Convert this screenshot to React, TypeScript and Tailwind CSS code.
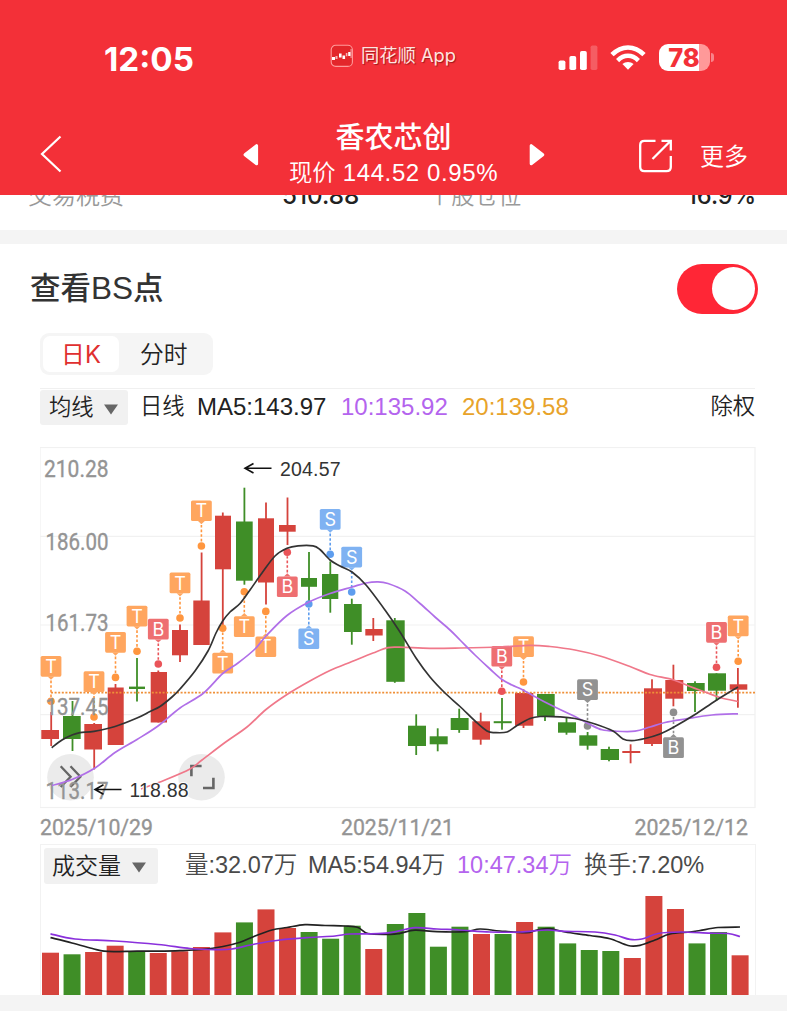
import React from 'react';

type Pt = [number, number];

const RED = '#d5433c';
const GREEN = '#3f8e27';

// [wickX, bodyLeft, bodyRight, bodyTop, bodyBottom, high, low, up]
const candles: [number, number, number, number, number, number, number, boolean][] = [
  [51.2, 41.3, 59, 730, 739, 712, 746, true],
  [72.5, 63, 80.7, 716, 739, 701, 751, false],
  [94.2, 84.3, 102, 724, 749.5, 723, 769.5, true],
  [115.5, 107.7, 123.7, 687.5, 745, 684, 745, true],
  [137, 129, 145, 686.6, 689, 658, 701.5, false],
  [158.3, 150.7, 167, 672, 722.5, 670.5, 722.5, true],
  [180, 172, 188, 630, 655.3, 624.5, 662, true],
  [201.6, 193.3, 209.7, 600.5, 645, 552.5, 645, true],
  [222.8, 215, 231, 515.7, 569.3, 512.5, 628, true],
  [244.4, 236, 252.7, 521.5, 580.7, 487.7, 584.7, false],
  [266, 258, 274, 518.3, 582.5, 502.5, 604.5, true],
  [287.5, 279, 295.7, 525, 531.7, 497.5, 545, true],
  [309, 301, 317, 578, 586.8, 552, 603, false],
  [330.3, 322, 338.3, 574, 599, 561.5, 612.7, false],
  [351.8, 344, 361.7, 604, 632, 598.7, 644.7, false],
  [373.3, 365.3, 382.7, 629, 635.5, 618, 641, true],
  [394.8, 386.3, 404.7, 620.3, 681.8, 618, 682.8, false],
  [416.2, 408, 426, 725.7, 746, 714.3, 755, false],
  [437.7, 429.7, 447.7, 736.3, 744.3, 728.3, 751.3, false],
  [459.2, 450.7, 468.6, 718, 730, 708.7, 732.8, false],
  [480.7, 472.3, 490, 721.3, 739.7, 712.7, 744.7, true],
  [502, 493.7, 511.7, 721.2, 723.2, 698, 729.7, false],
  [523.5, 515, 533.3, 693, 725.7, 689.3, 728, true],
  [545, 537, 554.7, 694, 716, 694, 721, false],
  [566.5, 558, 576, 722.3, 732.7, 717.3, 734.7, false],
  [587.6, 579.3, 597.3, 735.3, 745.7, 732, 749.7, false],
  [609, 600.7, 619, 749, 760, 746.7, 761.3, false],
  [630.6, 622.3, 640.3, 751, 753, 744.3, 763.3, true],
  [652, 644, 662, 688.3, 744, 679.3, 746, true],
  [673.4, 665.3, 683.3, 680, 698.7, 664.7, 706.3, true],
  [695, 687, 704.7, 683, 691, 681.3, 712, false],
  [716.5, 708, 726, 673.3, 690.7, 673.3, 700.7, false],
  [737.9, 729.7, 747.3, 684.3, 689.7, 668, 707.7, true],
];

// [x, letter, palette, boxTop, dotY]
const markers: [number, string, 'o' | 'r' | 'b' | 'g', number, number][] = [
  [51, 'T', 'o', 656, 701.3],
  [94, 'T', 'o', 671.3, 717],
  [115.5, 'T', 'o', 632, 677.4],
  [137, 'T', 'o', 605.7, 651.3],
  [158.3, 'B', 'r', 618.8, 664],
  [180, 'T', 'o', 572.6, 618],
  [201.4, 'T', 'o', 500.4, 546],
  [222.7, 'T', 'o', 652.8, 628.3],
  [244.3, 'T', 'o', 616.3, 591.7],
  [265.8, 'T', 'o', 636.4, 611.4],
  [287.3, 'B', 'r', 576.4, 552.2],
  [308.8, 'S', 'b', 628.4, 604],
  [330.2, 'S', 'b', 509, 554.3],
  [351.7, 'S', 'b', 546.7, 592],
  [501.8, 'B', 'r', 645.9, 691.3],
  [523.5, 'T', 'o', 636.3, 682],
  [587.5, 'S', 'g', 679.3, 726],
  [673.5, 'B', 'g', 737.3, 712.4],
  [716.5, 'B', 'r', 622, 667.3],
  [738.2, 'T', 'o', 615.6, 661.3],
];

const palette = {
  o: { box: '#ffa65f', dot: '#ff963f' },
  r: { box: '#ee6f71', dot: '#ea5459' },
  b: { box: '#7fb2f2', dot: '#5e9dee' },
  g: { box: '#929292', dot: '#8e8e8e' },
};

const ma5: Pt[] = [[51.7,747.7],[62,740],[72,735],[80,732.6],[94,731.3],[115,726.5],[137,718],[150,711.5],[160,706.5],[172,697],[180,689],[195,671],[208,651],[216,633],[222.7,621],[230,612],[240,603.5],[250,590],[262,573],[275,556],[287,548.3],[298,545.8],[313,545.8],[320,549.5],[330,560],[340,566],[352,572],[366,585],[385,610],[400,632],[416,658],[430,677],[445,693],[460,706.5],[475,721],[487,731],[495,732.6],[507,732],[517,725.5],[530,718.5],[540,716.5],[560,716.8],[575,718.5],[595,724],[613,731],[623,739],[632,740.6],[645,738.5],[660,734],[674,727],[695,714.5],[716,700.5],[738,687]];
const ma10: Pt[] = [[52,785.5],[72,779.5],[95,768],[115,752.5],[137,739.5],[158,726],[180,708],[203,693.5],[222.7,673.5],[238,663],[255,649],[266,636],[287,615.5],[309,602],[330,593.5],[352,587],[366,583],[378,581.8],[388,583.5],[405,591],[420,603.5],[435,617],[450,630],[460,640],[475,655],[490,669],[502,679.5],[512,685],[523,690],[540,699.5],[560,709.5],[575,716.5],[590,724.5],[602,729.8],[615,731.2],[635,731.2],[650,727],[665,722.5],[685,719],[712,715],[738,713.8]];
const ma20: Pt[] = [[141,789],[165,780],[190,769],[202,760],[225,742.5],[247,727],[266,709.5],[287,694.5],[309,681.5],[330,670.5],[352,661.5],[373,653],[388,647.7],[400,647.2],[430,648.3],[460,648],[500,647],[530,645.3],[550,646.5],[575,650],[600,656],[630,666.5],[650,674.5],[672,679.5],[690,686.5],[705,692],[720,697.5],[738,701.5]];

// [top, up]
const volumes: [number, boolean][] = [
  [952.7, true], [954.3, false], [952, true], [945.7, true], [951, false], [953, true], [951.3, true], [947, true],
  [932.4, true], [922.4, false], [909.4, true], [928, true], [932, false], [938.7, false], [925.7, false], [949, true],
  [924, false], [913, false], [946.7, false], [926.7, false], [934, true], [934, false], [922, true], [926.7, false],
  [943.4, false], [950, false], [951, false], [958, true], [896, true], [909, true], [943.4, false], [932, false], [955.3, true],
];
const vol5: Pt[] = [[50.5,937.7],[72,943],[94,949],[104,951.2],[115,951.6],[137,951.2],[158,951.2],[180,950.7],[202,949.5],[223,946.5],[240,942.3],[255,936],[272,930],[287,927.5],[305,924.6],[325,925.5],[345,926],[358,927.5],[368,933.5],[390,934.3],[400,933.3],[415,930.2],[437,931.7],[465,931.7],[480,929],[500,931],[526,932.7],[537,930],[550,928.7],[565,932],[590,935.5],[610,938.7],[628,945.5],[640,945.3],[655,940],[670,934],[690,932],[700,930.5],[718,927.5],[740,927]];
const vol10: Pt[] = [[50.5,933.8],[75,939],[115,941],[158,944.5],[190,948.5],[215,949.6],[232,949],[255,944],[280,940],[309,937.5],[335,936],[350,934],[378,933.7],[395,931.8],[415,927.6],[437,929],[460,930],[490,932],[520,932],[547,930],[565,931.3],[595,932],[615,935],[630,939.4],[642,939],[658,933.5],[680,932],[710,933.2],[728,933.5],[740,936.5]];

function smooth(p: Pt[]): string {
  let d = `M${p[0][0]} ${p[0][1]}`;
  for (let i = 0; i < p.length - 1; i++) {
    const a = p[Math.max(0, i - 1)];
    const b = p[i];
    const c = p[i + 1];
    const e = p[Math.min(p.length - 1, i + 2)];
    d += ` C${b[0] + (c[0] - a[0]) / 6} ${b[1] + (c[1] - a[1]) / 6} ${c[0] - (e[0] - b[0]) / 6} ${c[1] - (e[1] - b[1]) / 6} ${c[0]} ${c[1]}`;
  }
  return d;
}

function Label({ x, y, w, size, children }: { x: number; y: number; w: number; size: number; children: string }) {
  return (
    <text x={x} y={y} textLength={w} lengthAdjust="spacingAndGlyphs" fontSize={size} fill="#949494" className="font-['Roboto',sans-serif] font-normal">
      {children}
    </text>
  );
}

function Marker({ x, letter, kind, top, dot }: { x: number; letter: string; kind: keyof typeof palette; top: number; dot: number }) {
  const c = palette[kind];
  const above = top < dot;
  const edge = above ? top + 20.6 : top;
  const dir = above ? 1 : -1;
  return (
    <g>
      <line x1={x} x2={x} y1={edge + dir * 4} y2={dot - dir * 4} stroke={c.dot} strokeWidth="1.6" strokeDasharray="2.6 2" />
      <circle cx={x} cy={dot} r="3.8" fill={c.dot} />
      <rect x={x - 10.4} y={top} width="20.8" height="20.7" rx="1.6" fill={c.box} />
      <path d={`M${x - 3.4} ${edge} L${x} ${edge + dir * 3.2} L${x + 3.4} ${edge}Z`} fill={c.box} />
      <text x={x} y={top + 17} textAnchor="middle" fontSize="18" fill="#fff" className="font-['Inter',sans-serif]">
        {letter}
      </text>
    </g>
  );
}

function PriceChart() {
  return (
    <svg width="728" height="397" viewBox="40 447 728 397" className="block">
      <g stroke="#f1f1f1" strokeWidth="1.2" fill="none">
        <rect x="40" y="447.5" width="715" height="360" />
        <path d="M40 536.3H755M40 625H755M40 714.6H755" />
      </g>
      <circle cx="70.5" cy="777.3" r="23.3" fill="#ebebeb" />
      <circle cx="201.5" cy="777.3" r="23.3" fill="#ebebeb" />
      <g fill="none" stroke="#666" strokeWidth="2.3">
        <path d="M60.7 766.2 70.6 776.8 60.7 787M70.5 766.2 80.4 776.8 70.5 787" />
        <path strokeWidth="2.6" d="M191.4 776.3V766H201.6M203 788H213.4V777.7" />
      </g>
      {candles.map(([x, l, r, t, b, h, lo, up], i) => (
        <g key={i} fill={up ? RED : GREEN}>
          <rect x={x - 0.9} y={h} width="1.8" height={lo - h} />
          <rect x={l} y={t} width={r - l} height={b - t} />
        </g>
      ))}
      <line x1="51" x2="755" y1="692.6" y2="692.6" stroke="#ef9038" strokeWidth="1.8" strokeDasharray="2 1.6" />
      {markers.map(([x, letter, kind, top, dot]) => (
        <Marker key={x} x={x} letter={letter} kind={kind} top={top} dot={dot} />
      ))}
      <g stroke="#949494" strokeWidth=".35">
        <Label x={44} y={477.2} w={64.5} size={23.5}>210.28</Label>
        <Label x={45.5} y={549.6} w={63} size={23.5}>186.00</Label>
        <Label x={45.5} y={631.2} w={63} size={23.5}>161.73</Label>
        <Label x={45.5} y={715} w={63} size={23.5}>137.45</Label>
        <Label x={45.5} y={798.6} w={63} size={23.5}>113.17</Label>
      </g>
      <g fill="none" strokeLinejoin="round" strokeWidth="1.7">
        <path d={smooth(ma20)} stroke="#f0788a" />
        <path d={smooth(ma10)} stroke="#b06fe8" />
        <path d={smooth(ma5)} stroke="#333" />
      </g>
      <g fill="none" stroke="#111" strokeWidth="1.6">
        <path d="M271.5 468.3H245M253.5 463.5 245 468.3 253.5 473" />
        <path d="M121.5 789.5H95M103.5 784.7 95 789.5 103.5 794.2" />
      </g>
      <g fontSize="19.5" className="fill-[#333] font-['Liberation_Sans',sans-serif]">
        <text x="280" y="476" textLength="60.5">204.57</text>
        <text x="129.5" y="796.6" textLength="59" stroke="#fff" strokeWidth="2" paintOrder="stroke">118.88</text>
      </g>
      <g stroke="#949494" strokeWidth=".35">
        <Label x={40} y={835} w={113} size={22.3}>2025/10/29</Label>
        <Label x={341} y={835} w={113} size={22.3}>2025/11/21</Label>
        <Label x={634.5} y={835} w={113.5} size={22.3}>2025/12/12</Label>
      </g>
    </svg>
  );
}

function VolumeChart() {
  return (
    <svg width="714" height="107" viewBox="41 888 714 107" className="block">
      {volumes.map(([top, up], i) => (
        <rect key={i} x={42 + i * 21.55} y={top} width="17" height={995 - top} fill={up ? RED : GREEN} />
      ))}
      <g fill="none" strokeWidth="1.7">
        <path d={smooth(vol5)} stroke="#222" />
        <path d={smooth(vol10)} stroke="#8a30dc" />
      </g>
    </svg>
  );
}

function Caret() {
  return (
    <svg width="14" height="11" viewBox="0 0 14 11" className="mt-[3px] shrink-0">
      <path d="M0 .5H14L7 10.5Z" fill="#666" />
    </svg>
  );
}

function StatusBar() {
  return (
    <div className="flex h-[112px] items-start text-white">
      <div className="mt-[39px] ml-[104px] w-[226px] text-[33.2px] leading-[40px] font-bold">12:05</div>
      <div className="mt-[43px] flex w-[228px] items-center gap-[7px]">
        <svg width="24" height="24" viewBox="0 0 24 24" fill="none">
          <rect x="1.2" y="1.2" width="21.2" height="21.2" rx="4.5" fill="#e3262b" stroke="#ff9a9a" strokeWidth="1.1" />
          <g fill="#fff">
            <path d="M2 13h3v3H2zM9 9.5h2.6v4H9zM12.5 11.5h2.6v3.5h-2.6zM18.2 8h2.3v4h-2.3z" />
            <path d="M5.5 12h2v3h-2zM15.8 9h1.6v3.2h-1.6zM20.6 5h.9v9h-.9z" opacity=".65" />
          </g>
        </svg>
        <span className="text-[18.3px] leading-[25px] whitespace-nowrap text-[#ffe5e0] [text-shadow:1px_1px_1px_rgba(90,0,0,.55)]">同花顺 App</span>
      </div>
      <div className="mt-[43px] flex items-start">
        <svg width="40" height="28" viewBox="558 43 40 28" fill="#fff">
          <rect x="558.6" y="60.5" width="6.8" height="9.6" rx="1.8" />
          <rect x="569.4" y="56" width="6.8" height="14.1" rx="1.8" />
          <rect x="580" y="51" width="6.8" height="19.1" rx="1.8" />
          <rect x="590.6" y="45.5" width="6.8" height="24.6" rx="1.8" opacity=".22" />
        </svg>
        <svg width="36" height="28" viewBox="610 43 36 28" className="ml-[12px]" fill="none" stroke="#fff">
          <path d="M612 54.7C621.5 45 634.5 45 644 54.7" strokeWidth="4.6" />
          <path d="M617.6 60.6C624 54.2 632 54.2 638.4 60.6" strokeWidth="4.4" />
          <path d="M628 69.8 622.4 64C625.5 61.2 630.5 61.2 633.6 64Z" fill="#fff" stroke="none" />
        </svg>
        <div className="mt-[1px] ml-[12.5px] flex h-[27px] w-[51px] items-center justify-center rounded-[9px] bg-[linear-gradient(90deg,#fff_0_78%,#f99_78%)] text-[25.5px] leading-[27px] font-extrabold text-[#f33038]">78</div>
        <div className="mt-[10px] ml-[1.5px] h-[9px] w-[3px] rounded-r-full bg-[#f8838a]" />
      </div>
    </div>
  );
}

function NavBar() {
  return (
    <div className="flex h-[83px] items-start text-white">
      <svg width="24" height="40" viewBox="39 134 24 40" className="mt-[22px] ml-[39px]" fill="none" stroke="#fff" strokeWidth="2.2">
        <path d="M60.5 136.5 42 154 60.5 171.5" />
      </svg>
      <svg width="16" height="22" viewBox="243 144 16 22" className="mt-[32px] ml-[180px]">
        <path d="M245 154.8 256.6 145.7V163.8Z" fill="#fff" stroke="#fff" strokeWidth="3" strokeLinejoin="round" />
      </svg>
      <div className="ml-[27px] flex w-[215px] flex-col items-center pt-[6px] whitespace-nowrap">
        <div className="text-[29px] leading-[40px] font-medium">香农芯创</div>
        <div className="font-['Liberation_Sans','Noto_Sans_CJK_SC',sans-serif] text-[24px] leading-[30px] font-[350] tracking-[0.6px]">
          <span className="text-[23.3px] tracking-normal">现价</span> 144.52 0.95%
        </div>
      </div>
      <svg width="18" height="22" viewBox="528 144 18 22" className="mt-[32px] ml-[27px]">
        <path d="M542.8 154.8 531.2 145.7V163.8Z" fill="#fff" stroke="#fff" strokeWidth="3" strokeLinejoin="round" />
      </svg>
      <svg width="36" height="36" viewBox="638 138 36 36" className="mt-[26px] ml-[92px]" fill="none" stroke="#fff" strokeWidth="2.3">
        <path d="M655.5 140.8H644.5Q640.2 140.8 640.2 145V167Q640.2 171.2 644.5 171.2H666.5Q670.8 171.2 670.8 167V156" />
        <path d="M661.5 140.8H670.8V150.5M670.5 141 652.5 159" />
      </svg>
      <div className="mt-[27px] ml-[26px] text-[24px] leading-[36px] font-[350]">更多</div>
    </div>
  );
}

export default function App() {
  return (
    <div className="h-[1024px] w-[787px] overflow-hidden bg-white font-['Inter','Noto_Sans_CJK_SC',sans-serif] text-[#222]">
      <header className="h-[195px] bg-[#f33038]">
        <StatusBar />
        <NavBar />
      </header>

      <div className="h-[35px] overflow-hidden whitespace-nowrap">
        <div className="-mt-[17px] flex h-[36px] items-center text-[24px]">
          <span className="ml-[28px] w-[254px] font-[350] text-[#999]">交易税费</span>
          <span className="w-[146px] text-[24.2px] font-medium">510.88</span>
          <span className="w-[259px] text-[23.3px] font-[350] text-[#999]">个股仓位</span>
          <span className="text-[23.6px] font-medium">16.9%</span>
        </div>
      </div>
      <div className="h-[14px] bg-[#f4f4f4]" />

      <section className="h-[751px]">
        <div className="flex h-[89px] items-center justify-between pr-[29.5px] pl-[30px]">
          <h2 className="text-[30.5px] font-medium text-[#333]">
            查看<span className="font-['Liberation_Sans',sans-serif] text-[31.5px] font-normal">BS</span>点
          </h2>
          <div className="flex h-[50px] w-[81px] items-center justify-end rounded-full bg-[#ff2636] pr-[3px]">
            <div className="size-[43px] rounded-full bg-white" />
          </div>
        </div>

        <div className="ml-[40px] flex h-[42px] w-[173px] items-center rounded-[9px] bg-[#f5f5f5] p-[3px] text-[23.8px]">
          <div className="flex h-[36px] w-[76px] items-center justify-center rounded-[7px] bg-white pt-[2px] text-[#e02f2f]">日K</div>
          <div className="flex-1 pt-[2px] pl-[21px] font-[350]">分时</div>
        </div>

        <div className="mt-[13px] ml-[40px] flex h-[59px] w-[715px] items-start border-t border-[#f0f0f0] pt-[1px] font-['Liberation_Sans','Noto_Sans_CJK_SC',sans-serif] text-[22.3px] leading-[34px] font-[350] whitespace-nowrap">
          <div className="flex h-[35px] w-[88px] items-center gap-[11px] rounded-[3px] bg-[#f1f1f1] pl-[9px]">
            <span className="w-[44px]">均线</span>
            <Caret />
          </div>
          <span className="ml-[12px] w-[57px]">日线</span>
          <span className="w-[144px] text-[24px]">MA5:143.97</span>
          <span className="w-[121px] text-[24px] text-[#b464ee]">10:135.92</span>
          <span className="w-[125px] text-[24px] text-[#e8a32a]">20:139.58</span>
          <span className="ml-auto">除权</span>
        </div>

        <div className="ml-[40px]">
          <PriceChart />
        </div>

        <div className="ml-[40px] h-[151px] w-[716px] border-x border-t border-[#f2f2f2]">
          <div className="flex h-[43px] items-start pt-[3px] pl-[3px] font-['Liberation_Sans','Noto_Sans_CJK_SC',sans-serif] text-[23.5px] leading-[35px] font-[350] whitespace-nowrap text-[#4a4a4a]">
            <div className="flex h-[36px] w-[114px] items-center gap-[11px] rounded-[3px] bg-[#f1f1f1] pl-[8px] text-[#222]">
              <span className="w-[69px] text-[23px]">成交量</span>
              <Caret />
            </div>
            <span className="ml-[27px] w-[123px]">量:32.07万</span>
            <span className="w-[149px]">MA5:54.94万</span>
            <span className="w-[127px] text-[#b464ee]">10:47.34万</span>
            <span>换手:7.20%</span>
          </div>
          <VolumeChart />
        </div>
      </section>
      <div className="h-[16px] bg-[#f4f4f4]" />
    </div>
  );
}
